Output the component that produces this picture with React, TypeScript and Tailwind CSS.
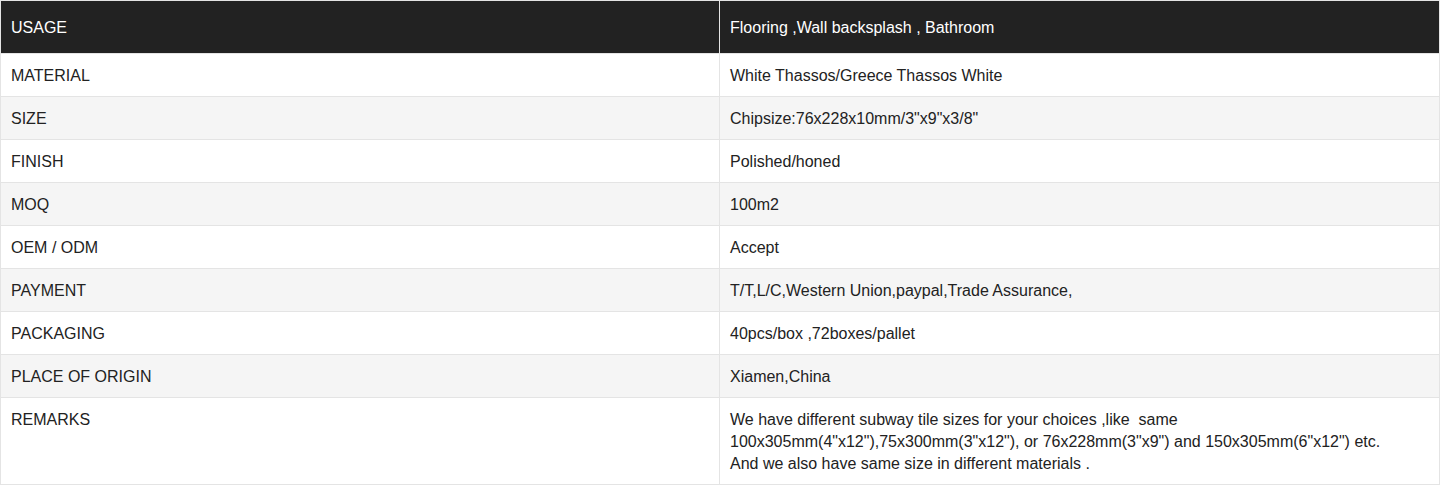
import React from "react";

const rows: [string, React.ReactNode][] = [
  ["MATERIAL", "White Thassos/Greece Thassos White"],
  ["SIZE", 'Chipsize:76x228x10mm/3"x9"x3/8"'],
  ["FINISH", "Polished/honed"],
  ["MOQ", "100m2"],
  ["OEM / ODM", "Accept"],
  ["PAYMENT", "T/T,L/C,Western Union,paypal,Trade Assurance,"],
  ["PACKAGING", "40pcs/box ,72boxes/pallet"],
  ["PLACE OF ORIGIN", "Xiamen,China"],
  [
    "REMARKS",
    <>
      We have different subway tile sizes for your choices ,like&nbsp; same
      <br />
      100x305mm(4"x12"),75x300mm(3"x12"), or 76x228mm(3"x9") and 150x305mm(6"x12") etc.
      <br />
      And we also have same size in different materials .
    </>,
  ],
];

export default function App() {
  return (
    <div className="w-[1440px] bg-white" style={{ fontFamily: '"Liberation Sans", Arial, sans-serif' }}>
      <table className="w-full border-collapse table-fixed text-[16px] leading-[22px]">
        <colgroup>
          <col className="w-[719px]" />
          <col />
        </colgroup>
        <tbody>
          <tr className="bg-[#222222] text-white">
            <td className="border border-[#e4e4e4] px-[10px] pt-[16px] pb-[14px]">USAGE</td>
            <td className="border border-[#e4e4e4] px-[10px] pt-[16px] pb-[14px]">Flooring ,Wall backsplash , Bathroom</td>
          </tr>
          {rows.map(([k, v], i) => (
            <tr key={k} className={i % 2 === 1 ? "bg-[#f5f5f5] text-[#222]" : "bg-white text-[#222]"}>
              <td className="border border-[#e4e4e4] px-[10px] pt-[11px] pb-[9px] align-top">{k}</td>
              <td className="border border-[#e4e4e4] px-[10px] pt-[11px] pb-[9px] align-top">{v}</td>
            </tr>
          ))}
        </tbody>
      </table>
    </div>
  );
}
